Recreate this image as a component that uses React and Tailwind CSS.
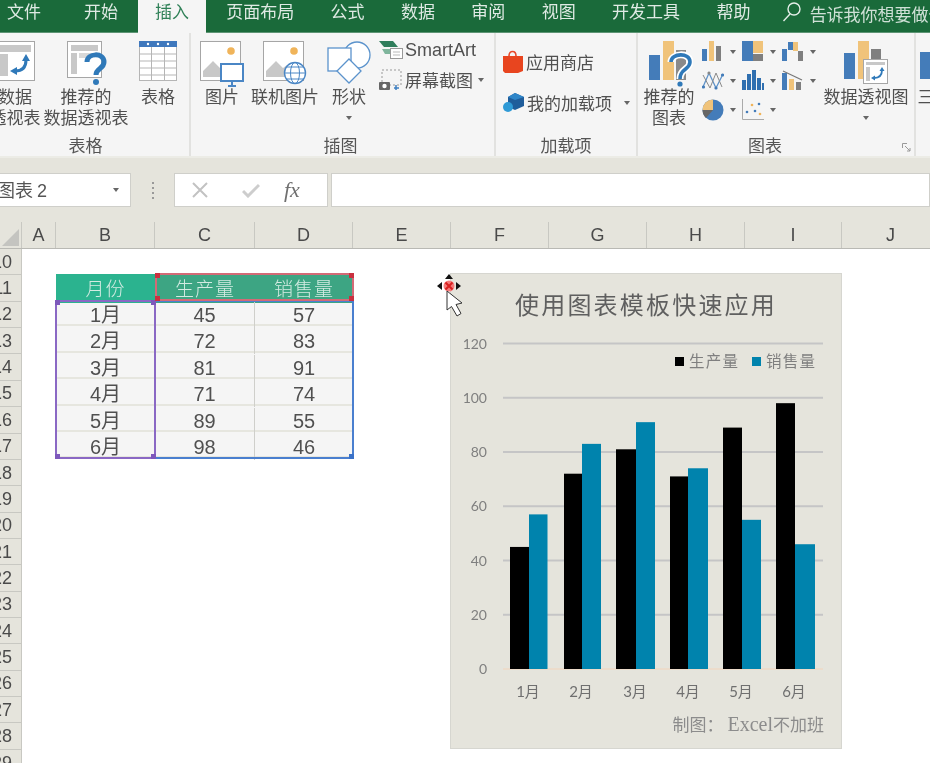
const cjk = '"Noto Sans CJK SC", sans-serif'

const tabs = [
  ['文件', 'ml-[-11px]'],
  ['开始', 'ml-[7px]'],
]
const tabsAfter = ['页面布局', '公式', '数据', '审阅', '视图', '开发工具', '帮助']

function Caret({ className = '' }) {
  return <span className={`inline-block w-0 h-0 border-x-[3.5px] border-x-transparent border-t-[4px] border-t-[#666] ${className}`} />
}

function Tabs() {
  return (
    <div className="h-[33px] shrink-0 bg-[#1a6a3a] flex items-stretch text-[17px] leading-[22px] text-[#dfeae4] border-b border-[#5d9474] whitespace-nowrap">
      {tabs.map(([t, c]) => (
        <div key={t} className={`px-[18px] ${c}`}>{t}</div>
      ))}
      <div className="px-[17px] ml-[2px] h-[34px] bg-[#f5f5f5] text-[#2f8057]">插入</div>
      <div className="flex ml-[2px]">
        {tabsAfter.map((t) => (
          <div key={t} className="px-[18.2px]">{t}</div>
        ))}
      </div>
      <div className="flex items-start ml-[13px] gap-[8px] text-[17px] text-[#cfe0d6]">
        <svg className="mt-[1px]" width="20" height="22" viewBox="0 0 20 22" fill="none" stroke="#e4eee8" strokeWidth="1.4">
          <circle cx="12" cy="8" r="6" />
          <path d="M8 13 L1.5 20" />
        </svg>
        <span className="mt-[3px]">告诉我你想要做什么</span>
      </div>
    </div>
  )
}

function PivotIcon() {
  return (
    <svg width="40" height="40" viewBox="0 0 40 40">
      <rect x="0.5" y="0.5" width="39" height="39" fill="#fff" stroke="#a6a6a6" />
      <rect x="4" y="4" width="32" height="7" fill="#c8c8c8" />
      <rect x="4" y="13" width="9" height="22" fill="#c8c8c8" />
      <path d="M20 30 C28 30 31 26 31 19" fill="none" stroke="#2f79b9" strokeWidth="3" />
      <path d="M27 20 L31 13 L35 20 Z M22 26 L15 30 L22 34 Z" fill="#2f79b9" />
    </svg>
  )
}

function RecPivotIcon() {
  return (
    <svg className="ml-[3px]" width="42" height="44" viewBox="0 0 42 44">
      <rect x="0.5" y="0.5" width="34" height="36" fill="#fff" stroke="#a6a6a6" />
      <rect x="4" y="4" width="27" height="6" fill="#c8c8c8" />
      <rect x="4" y="12" width="6" height="21" fill="#c8c8c8" />
      <rect x="12" y="12" width="14" height="5" fill="#d8d8d8" />
      <path d="M20 21 C20 12 37 11 37 21 C37 28 29 27 29 34" fill="none" stroke="#2f79b9" strokeWidth="5" />
      <circle cx="29" cy="41" r="3" fill="#2f79b9" />
    </svg>
  )
}

function TableIcon() {
  return (
    <svg width="38" height="40" viewBox="0 0 38 40">
      <rect x="0.5" y="0.5" width="37" height="39" fill="#fff" stroke="#b5b5b5" />
      <rect x="0" y="0" width="38" height="6" fill="#3f78bd" />
      <circle cx="9" cy="3" r="1.2" fill="#fff" />
      <circle cx="19" cy="3" r="1.2" fill="#fff" />
      <circle cx="29" cy="3" r="1.2" fill="#fff" />
      <path d="M0 13H38M0 20H38M0 27H38M0 34H38M12.5 6V40M25.5 6V40" stroke="#b5b5b5" />
    </svg>
  )
}

function PictureBase() {
  return (
    <>
      <rect x="0.5" y="0.5" width="40" height="39" fill="#fff" stroke="#a6a6a6" />
      <circle cx="31" cy="10" r="3.8" fill="#f0b45a" />
      <path d="M3 36 L3 30 L13 20 L20 27 L24 24 L34 36 Z" fill="#c8c8c8" />
    </>
  )
}

function PictureIcon() {
  return (
    <svg width="44" height="46" viewBox="0 0 44 46">
      <PictureBase />
      <rect x="21" y="23" width="22" height="17" fill="#fff" stroke="#4a86c5" strokeWidth="2" />
      <path d="M32 41 V44 M28 45 H36" stroke="#4a86c5" strokeWidth="2" />
    </svg>
  )
}

function OnlinePictureIcon() {
  return (
    <svg width="44" height="46" viewBox="0 0 44 46">
      <PictureBase />
      <circle cx="32" cy="32" r="10.5" fill="#fff" stroke="#4a86c5" strokeWidth="1.4" />
      <ellipse cx="32" cy="32" rx="4.5" ry="10.5" fill="none" stroke="#4a86c5" />
      <path d="M21.5 32 H42.5 M23.5 26 H40.5 M23.5 38 H40.5" stroke="#4a86c5" />
    </svg>
  )
}

function ShapesIcon() {
  return (
    <svg width="44" height="44" viewBox="0 0 44 44" fill="#fff" stroke="#5b93cc" strokeWidth="1.3">
      <circle cx="30" cy="14" r="13" />
      <rect x="1" y="7" width="23" height="23" />
      <path d="M22 18 L34 30 L22 42 L10 30 Z" />
    </svg>
  )
}

function SmartArtIcon() {
  return (
    <svg width="24" height="20" viewBox="0 0 24 20">
      <path d="M0 1 H14 L19 7 H5 Z" fill="#2f7d5b" />
      <path d="M3 9 H11 V14 H6 Z" fill="#7fb59c" />
      <rect x="11.5" y="8.5" width="12" height="10" fill="#fff" stroke="#999" />
      <path d="M14 12 H21 M14 15 H21" stroke="#bbb" />
    </svg>
  )
}

function ScreenshotIcon() {
  return (
    <svg width="24" height="22" viewBox="0 0 24 22">
      <rect x="3" y="1" width="19" height="15" fill="none" stroke="#999" strokeDasharray="2 2" />
      <rect x="0" y="13" width="11" height="8" rx="1" fill="#666" />
      <circle cx="5.5" cy="17" r="2.2" fill="#fff" />
      <path d="M17 16 V21 M15 19 H20" stroke="#3e7fc1" strokeWidth="1.5" />
    </svg>
  )
}

function StoreIcon() {
  return (
    <svg width="20" height="24" viewBox="0 0 20 24">
      <path d="M6 6 C6 0 13 0 13 6" fill="none" stroke="#e8492a" strokeWidth="1.6" />
      <path d="M0 6 H20 V21 L15 23 H2 L0 21 Z" fill="#e8451f" />
    </svg>
  )
}

function AddinIcon() {
  return (
    <svg width="21" height="20" viewBox="0 0 21 20">
      <path d="M12 0 L21 4 V13 L12 17 L5 14 V4 Z" fill="#1f5d9b" />
      <path d="M5 4 L12 7 L21 4 L12 0 Z" fill="#2f86c9" />
      <circle cx="5" cy="14" r="5" fill="#2f9ad6" />
    </svg>
  )
}

function RecChartIcon() {
  return (
    <svg className="ml-[3px]" width="44" height="46" viewBox="0 0 44 46">
      <rect x="0" y="14" width="11" height="25" fill="#447cb9" />
      <rect x="14" y="0" width="11" height="39" fill="#f0c37a" />
      <rect x="27" y="9" width="10" height="30" fill="#8a8a8a" />
      <path d="M22 21 C22 12 41 11 41 21 C41 29 31 27 31 38" fill="none" stroke="#fff" strokeWidth="7" />
      <path d="M22 21 C22 12 41 11 41 21 C41 29 31 27 31 38" fill="none" stroke="#2f79b9" strokeWidth="3.6" />
      <circle cx="31" cy="43" r="2.6" fill="#2f79b9" />
    </svg>
  )
}

function PivotChartIcon() {
  return (
    <svg width="44" height="44" viewBox="0 0 44 44">
      <rect x="0" y="12" width="11" height="26" fill="#447cb9" />
      <rect x="14" y="0" width="11" height="38" fill="#f0c37a" />
      <rect x="27" y="8" width="10" height="30" fill="#7f7f7f" />
      <rect x="19.5" y="18.5" width="24" height="24" fill="#fff" stroke="#a6a6a6" />
      <rect x="22" y="21" width="19" height="3" fill="#c8c8c8" />
      <rect x="22" y="26" width="4" height="14" fill="#c8c8c8" />
      <path d="M30 37 C36 37 38 33 38 29" fill="none" stroke="#2f79b9" strokeWidth="1.8" />
      <path d="M35.5 30 L38 26 L40.5 30 Z M31 34.5 L27 37 L31 39.5 Z" fill="#2f79b9" />
    </svg>
  )
}

const smallCharts = [
  <>
    <rect x="0" y="8" width="5" height="12" fill="#447cb9" />
    <rect x="7" y="0" width="5" height="20" fill="#f0c37a" />
    <rect x="14" y="5" width="5" height="15" fill="#7f7f7f" />
  </>,
  <>
    <rect x="0" y="0" width="11" height="20" fill="#447cb9" />
    <rect x="11" y="0" width="10" height="12" fill="#f0c37a" />
    <rect x="11" y="13" width="10" height="7" fill="#7f7f7f" />
  </>,
  <>
    <rect x="0" y="8" width="5" height="12" fill="#447cb9" />
    <rect x="6" y="1" width="5" height="8" fill="#447cb9" />
    <rect x="11" y="1" width="5" height="9" fill="#f0c37a" />
    <rect x="16" y="10" width="5" height="10" fill="#7f7f7f" />
  </>,
  <>
    <path d="M1 17 L7 3 L14 18 L21 4" fill="none" stroke="#5f93c9" strokeWidth="1.3" />
    <path d="M1 5 L8 18 L14 3 L20 17" fill="none" stroke="#8a8a8a" strokeWidth="1" />
    <circle cx="1.5" cy="17" r="1.6" fill="#447cb9" />
    <circle cx="7" cy="3" r="1.6" fill="#888" />
    <circle cx="14" cy="18" r="1.6" fill="#447cb9" />
    <circle cx="20.5" cy="5" r="1.6" fill="#447cb9" />
  </>,
  <>
    <rect x="0" y="10" width="4" height="10" fill="#2f6fb0" />
    <rect x="5" y="4" width="4" height="16" fill="#2f6fb0" />
    <rect x="10" y="0" width="4" height="20" fill="#2f6fb0" />
    <rect x="15" y="8" width="4" height="12" fill="#2f6fb0" />
    <rect x="20" y="13" width="2" height="7" fill="#2f6fb0" />
  </>,
  <>
    <rect x="0" y="3" width="5" height="17" fill="#447cb9" />
    <rect x="7" y="9" width="5" height="11" fill="#f0c37a" />
    <rect x="14" y="12" width="5" height="8" fill="#7f7f7f" />
    <path d="M1 1 L20 10" stroke="#777" strokeWidth="1.2" />
  </>,
  <>
    <circle cx="11" cy="11" r="10.5" fill="#447cb9" />
    <path d="M11 11 L11 0.5 A10.5 10.5 0 0 0 0.5 11 Z" fill="#f0c37a" />
    <path d="M11 11 L0.5 11 A10.5 10.5 0 0 0 4 19 Z" fill="#666" />
  </>,
  <>
    <path d="M0.5 0 V20.5 H22" fill="none" stroke="#aaa" />
    <circle cx="5" cy="13" r="1.3" fill="#447cb9" />
    <circle cx="10" cy="6" r="1.3" fill="#f0b45a" />
    <circle cx="13" cy="12" r="1.3" fill="#447cb9" />
    <circle cx="17" cy="5" r="1.3" fill="#447cb9" />
    <circle cx="18" cy="15" r="1.3" fill="#f0b45a" />
  </>,
]

function Group({ width, label, children, border = true, launcher = false, labelClass = '' }) {
  return (
    <div className={`relative shrink-0 flex flex-col ${border ? 'border-r-2 border-[#e2e2e0]' : ''}`} style={{ width }}>
      <div className="flex-1 flex min-h-0">{children}</div>
      <div className={`h-[22px] text-center text-[17px] leading-[22px] text-[#555] ${labelClass}`}>{label}</div>
      {launcher && (
        <svg className="absolute right-[3px] bottom-[4px]" width="9" height="9" viewBox="0 0 9 9" fill="none" stroke="#999">
          <path d="M0.5 5 V0.5 H5 M3 3 L8 8 M8 5 V8 H5" />
        </svg>
      )}
    </div>
  )
}

function Big({ width, icon, lines, caret, iconH = 44 }) {
  return (
    <div className="shrink-0 flex flex-col items-center text-[17px] leading-[21px] text-[#505050] pt-[8px] whitespace-nowrap" style={{ width }}>
      <div className="flex items-start justify-center" style={{ height: iconH }}>{icon}</div>
      {lines.map((l) => <div key={l}>{l}</div>)}
      {caret && <Caret className="mt-[10px]" />}
    </div>
  )
}

function Ribbon() {
  return (
    <div className="h-[123px] shrink-0 bg-[#f5f5f5] flex ml-[-14px] w-[960px]">
      <Group width={205} label="表格" labelClass="pr-[4px]">
        <Big width={58} icon={<PivotIcon />} lines={['数据', '透视表']} />
        <Big width={84} icon={<RecPivotIcon />} lines={['推荐的', '数据透视表']} />
        <Big width={60} icon={<TableIcon />} lines={['表格']} />
      </Group>
      <Group width={305} label="插图" labelClass="pr-[4px]">
        <div className="w-[9px]" />
        <Big width={44} icon={<PictureIcon />} lines={['图片']} />
        <Big width={82} icon={<OnlinePictureIcon />} lines={['联机图片']} />
        <Big width={46} icon={<ShapesIcon />} lines={['形状']} caret />
        <div className="pl-[7px] pt-[5px] flex flex-col gap-[6px] text-[17px] text-[#505050] whitespace-nowrap">
          <div className="flex items-center gap-[2px] h-[24px]">
            <SmartArtIcon />
            <span className="text-[18px] font-['Liberation_Sans']">SmartArt</span>
          </div>
          <div className="flex items-center gap-[2px] h-[24px]">
            <ScreenshotIcon />
            <span>屏幕截图</span>
            <Caret className="ml-[3px]" />
          </div>
        </div>
      </Group>
      <Group width={142} label="加载项">
        <div className="pl-[7px] pt-[17px] flex flex-col gap-[17px] text-[17px] text-[#505050] whitespace-nowrap">
          <div className="flex items-center gap-[3px] h-[24px]">
            <StoreIcon />
            <span>应用商店</span>
          </div>
          <div className="flex items-center gap-[3px] h-[24px]">
            <AddinIcon />
            <span>我的加载项</span>
            <Caret className="ml-[9px]" />
          </div>
        </div>
      </Group>
      <Group width={278} label="图表" launcher labelClass="pr-[22px]">
        <div className="w-[5px]" />
        <Big width={52} icon={<RecChartIcon />} lines={['推荐的', '图表']} />
        <div className="grid grid-cols-[repeat(3,40px)] auto-rows-[29px] ml-[7px] pt-[4px] h-fit">
          {smallCharts.map((c, i) => (
            <div key={i} className="flex items-center gap-[6px]">
              <svg width="22" height="22" viewBox="0 0 22 22" className="shrink-0">{c}</svg>
              <Caret />
            </div>
          ))}
        </div>
        <Big width={88} icon={<PivotChartIcon />} lines={['数据透视图']} caret />
      </Group>
      <Group width={30} label="" border={false}>
        <Big width={20} icon={<svg width="20" height="40"><rect x="4" y="11" width="12" height="27" fill="#447cb9" /></svg>} lines={['三']} />
      </Group>
    </div>
  )
}

function FormulaBar() {
  return (
    <div className="h-[65px] shrink-0 bg-[#e5e4dc] flex items-start pt-[15px] border-t-2 border-[#ecece6]">
      <div className="w-[132px] h-[34px] bg-white border border-[#cfcfca] flex items-center justify-between pr-[11px] text-[18px] text-[#555] ml-[-1px] overflow-hidden">
        <span className="ml-[-3px] whitespace-nowrap">图表 <span className="font-['Liberation_Sans']">2</span></span>
        <Caret />
      </div>
      <div className="w-[43px] h-[34px] flex flex-col items-center justify-center gap-[3px]">
        <i className="w-[2px] h-[2px] bg-[#999]" />
        <i className="w-[2px] h-[2px] bg-[#999]" />
        <i className="w-[2px] h-[2px] bg-[#999]" />
        <i className="w-[2px] h-[2px] bg-[#999]" />
      </div>
      <div className="w-[154px] h-[34px] bg-white border border-[#cfcfca] flex items-center">
        <svg className="ml-[17px]" width="16" height="16" viewBox="0 0 16 16" stroke="#c2c2c2" strokeWidth="2">
          <path d="M1 1 L15 15 M15 1 L1 15" />
        </svg>
        <svg className="ml-[34px]" width="18" height="15" viewBox="0 0 18 15" fill="none" stroke="#cdcdcd" strokeWidth="3">
          <path d="M1 8 L6 13 L17 2" />
        </svg>
        <span className="ml-[24px] text-[22px] leading-none italic text-[#707070] font-['Liberation_Serif']">fx</span>
      </div>
      <div className="ml-[3px] flex-1 h-[34px] bg-white border border-[#cfcfca]" />
    </div>
  )
}

const cols = [['A', 34], ['B', 99], ['C', 100], ['D', 98], ['E', 98], ['F', 98], ['G', 98], ['H', 98], ['I', 97], ['J', 98]]

function ColumnHeader() {
  return (
    <div className="h-[28px] pt-[1px] shrink-0 bg-[#e5e4dc] flex border-b border-[#b9b9b4] text-[18px] text-[#4a4a4a] font-['Liberation_Sans']">
      <div className="w-[22px] shrink-0 relative border-r border-[#c8c8c2]">
        <div className="absolute right-[2px] bottom-[2px] w-0 h-0 border-l-[17px] border-l-transparent border-b-[17px] border-b-[#c4c4c0]" />
      </div>
      {cols.map(([c, w]) => (
        <div key={c} className="shrink-0 flex items-center justify-center border-r border-[#c8c8c2]" style={{ width: w }}>{c}</div>
      ))}
    </div>
  )
}

const rowNums = Array.from({ length: 20 }, (_, i) => i + 10)

function RowHeader() {
  return (
    <div className="w-[22px] shrink-0 bg-[#e5e4dc] border-r border-[#c8c8c2] overflow-hidden font-['Liberation_Sans'] text-[18px] text-[#4a4a4a]">
      {rowNums.map((n) => (
        <div key={n} className="h-[26.37px] pt-[1px] flex items-center justify-end pr-[9px] border-b border-[#c8c8c2]">{n}</div>
      ))}
    </div>
  )
}

const tableRows = [
  ['1月', 45, 57],
  ['2月', 72, 83],
  ['3月', 81, 91],
  ['4月', 71, 74],
  ['5月', 89, 55],
  ['6月', 98, 46],
]

function Handles({ color }) {
  const base = `absolute w-[5px] h-[5px] ${color}`
  return (
    <>
      <i className={`${base} -left-[2px] -top-[2px]`} />
      <i className={`${base} -right-[2px] -top-[2px]`} />
      <i className={`${base} -left-[2px] -bottom-[2px]`} />
      <i className={`${base} -right-[2px] -bottom-[2px]`} />
    </>
  )
}

function DataTable() {
  return (
    <div className="relative shrink-0 w-[297px] text-[#505050] text-[19px]">
      <div className="grid grid-cols-[99px_100px_98px] h-[26px] text-[19px] font-light text-[#d3ebe2]">
        <div className="bg-[#2bb38f] flex items-center justify-center tracking-[1px]">月份</div>
        <div className="bg-[#3da583] flex items-center justify-center tracking-[1px]">生产量</div>
        <div className="bg-[#3da583] flex items-center justify-center tracking-[1px]">销售量</div>
      </div>
      {tableRows.map(([m, a, b]) => (
        <div key={m} className="grid grid-cols-[99px_100px_98px] h-[26.4px] pt-[2px] bg-[#f5f5f5] border-b-2 border-[#e6e6df] leading-[26px] text-center font-['Liberation_Sans',_'Noto_Sans_CJK_SC'] text-[20px]">
          <div>{m}</div>
          <div className="border-r border-[#cfcfcb]">{a}</div>
          <div>{b}</div>
        </div>
      ))}
      {/* selection boxes */}
      <div className="absolute -left-[1px] top-[26px] w-[101px] h-[159px] border-2 border-[#8a68c4]">
        <Handles color="bg-[#7d58bb]" />
      </div>
      <div className="absolute left-[100px] top-[26px] w-[198px] h-[159px] border-2 border-l-0 border-[#4a7fcf]">
        <i className="absolute -right-[2px] -bottom-[2px] w-[5px] h-[5px] bg-[#3b72c8]" />
      </div>
      <div className="absolute left-[99px] -top-[1px] w-[199px] h-[28px] border-2 border-[#d36a76]">
        <Handles color="bg-[#c9303f]" />
      </div>
    </div>
  )
}

const series = [
  [45, 57, 510, 529, 547.5],
  [72, 83, 564, 582, 601],
  [81, 91, 616, 636, 655],
  [71, 74, 670, 688, 708],
  [89, 55, 723, 742, 761],
  [98, 46, 776, 795, 815],
]
const yOf = (v) => 669 - v * 2.7125
const months = [[528, '1月'], [581, '2月'], [635, '3月'], [688, '4月'], [741, '5月'], [794, '6月']]

function Plot() {
  return (
    <svg className="block shrink-0" width="390" height="375" viewBox="451 330 390 375">
      {[120, 100, 80, 60, 40, 20].map((v) => (
        <g key={v}>
          <line x1="503" x2="823" y1={yOf(v)} y2={yOf(v)} stroke="#c5c5c6" strokeWidth="2" />
          <text x="487" y={yOf(v) + 5} textAnchor="end" fontSize="14" fontFamily="Lato" fill="#7f7f7f">{v}</text>
        </g>
      ))}
      <line x1="503" x2="823" y1="669" y2="669" stroke="#ecdccb" strokeWidth="2" />
      <text x="487" y="674" textAnchor="end" fontSize="14" fontFamily="Lato" fill="#7f7f7f">0</text>
      {series.map(([a, b, x0, x1, x2]) => (
        <g key={x0}>
          <rect x={x0} y={yOf(a)} width={x1 - x0} height={a * 2.7125} fill="#000" />
          <rect x={x1} y={yOf(b)} width={x2 - x1} height={b * 2.7125} fill="#0083ad" />
        </g>
      ))}
      {months.map(([x, t]) => (
        <text key={t} x={x} y="697" textAnchor="middle" fontSize="15" fontFamily={`Lato, ${cjk}`} fill="#6f6f6f">{t}</text>
      ))}
      <rect x="675" y="357" width="9" height="9" fill="#000" />
      <text x="689" y="367" fontSize="15.5" letterSpacing="1.2" fontFamily={cjk} fill="#7f7f7f">生产量</text>
      <rect x="752" y="357" width="9" height="9" fill="#0083ad" />
      <text x="766" y="367" fontSize="15.5" letterSpacing="1.2" fontFamily={cjk} fill="#7f7f7f">销售量</text>
    </svg>
  )
}

function Chart() {
  return (
    <div className="relative shrink-0 w-[392px] h-[476px] mt-[-1px] bg-[#e5e4dc] border border-[#d6d6d0] flex flex-col">
      <div className="h-[56px] shrink-0 pt-[12px] text-center text-[24px] leading-[36px] tracking-[2.2px] text-[#5f5f5f]">使用图表模板快速应用</div>
      <Plot />
      <div className="pr-[17px] pt-[6px] text-right text-[17px] leading-[26px] text-[#8c8c8c] whitespace-nowrap">
        制图：<span className="ml-[4px] text-[20px] font-['Liberation_Serif']">Excel</span>不加班
      </div>
      {/* move cursor over the chart corner */}
      <svg className="absolute left-[-14px] top-[-1px]" width="32" height="44" viewBox="0 0 32 44">
        <circle cx="12" cy="13" r="5.5" fill="#f47a7a" />
        <path d="M8.5 9.5 L15.5 16.5 M15.5 9.5 L8.5 16.5" stroke="#d81f1f" strokeWidth="2" />
        <path d="M0 13 L5 9 V17 Z M24 13 L19 9 V17 Z M12 1 L8 6 H16 Z" fill="#111" />
        <path d="M10 18 L10 37 L14.5 33.5 L20 43 L24 40.5 L19 31.5 L25 30 Z" fill="#fff" stroke="#333" />
      </svg>
    </div>
  )
}

function Sheet() {
  return (
    <div className="flex-1 min-h-0 flex overflow-hidden">
      <RowHeader />
      <div className="flex-1 bg-white flex items-start pl-[34px] pt-[25px] gap-[97px]">
        <DataTable />
        <Chart />
      </div>
    </div>
  )
}

export default function App() {
  return (
    <div className="w-[930px] h-[763px] overflow-hidden flex flex-col bg-white blur-[0.5px]" style={{ fontFamily: cjk }}>
      <Tabs />
      <Ribbon />
      <FormulaBar />
      <ColumnHeader />
      <Sheet />
    </div>
  )
}
